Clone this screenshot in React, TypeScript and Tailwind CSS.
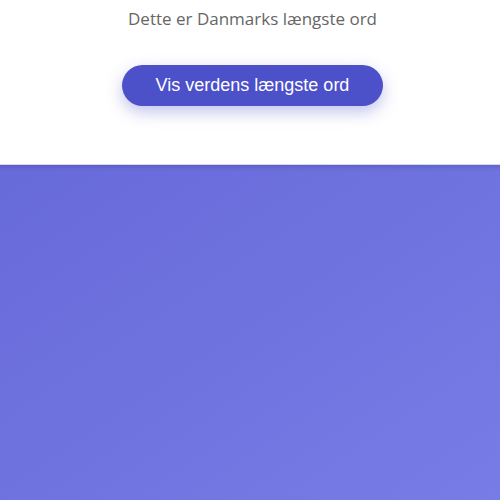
import React from "react";

export default function App() {
  return (
    <div className="w-[500px] h-[500px] flex flex-col overflow-hidden bg-white">
      <div className="h-[164px] flex flex-col items-center pt-[6px] pl-[5px]">
        <p
          className="text-[17px] leading-[26px] text-[#666666]"
          style={{ fontFamily: '"Open Sans", "Noto Sans", sans-serif' }}
        >
          Dette er Danmarks længste ord
        </p>
        <button
          className="mt-[33px] w-[261px] h-[41px] rounded-full bg-[#4c50c9] text-white text-[18px] shadow-[0_6px_16px_rgba(79,82,201,0.35)]"
          style={{ fontFamily: '"Liberation Sans", Arial, sans-serif' }}
        >
          Vis verdens længste ord
        </button>
      </div>
      <div className="flex-1 bg-gradient-to-br from-[#676ad9] to-[#777ce6] shadow-[inset_0_6px_4px_-4px_rgba(40,40,120,0.22)] border-t border-[#d8d8e0]" />
    </div>
  );
}
